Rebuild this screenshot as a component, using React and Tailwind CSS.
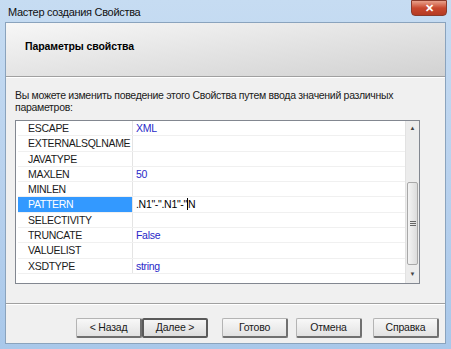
const rows = [
  { name: 'ESCAPE', value: 'XML' },
  { name: 'EXTERNALSQLNAME', value: '' },
  { name: 'JAVATYPE', value: '' },
  { name: 'MAXLEN', value: '50' },
  { name: 'MINLEN', value: '' },
  { name: 'PATTERN', value: '.N1"-".N1"-"N', selected: true },
  { name: 'SELECTIVITY', value: '' },
  { name: 'TRUNCATE', value: 'False' },
  { name: 'VALUELIST', value: '' },
  { name: 'XSDTYPE', value: 'string' },
];

const font = { fontFamily: '"Liberation Sans", Arial, sans-serif' };

function Button({ children, isDefault, className = '' }) {
  return (
    <button
      className={`flex h-[20px] w-[66px] items-center justify-center rounded-[2px] text-[10.5px] tracking-[-0.2px] text-[#1a1a1a] ${
        isDefault
          ? 'border-2 border-[#5a5a5a] bg-gradient-to-b from-[#f6f6f6] to-[#dcdcdc]'
          : 'border border-[#b4b4b4] border-r-2 border-b-2 border-r-[#707070] border-b-[#707070] bg-gradient-to-b from-[#f8f8f8] to-[#e2e2e2]'
      } ${className}`}
    >
      {children}
    </button>
  );
}

function ScrollBar() {
  return (
    <div className="flex w-[14px] flex-col border-l border-[#e2e2e2] bg-[#ececec]">
      <div className="flex h-[14px] items-center justify-center text-[6px] text-[#444]">▲</div>
      <div className="flex-1" />
      <div className="mx-[1px] flex h-[83px] items-center justify-center rounded-[2px] border border-[#a8a8a8] bg-gradient-to-r from-[#f4f4f4] to-[#dcdcdc]">
        <div className="flex flex-col gap-[1px]">
          <div className="h-px w-[6px] bg-[#666]" />
          <div className="h-px w-[6px] bg-[#666]" />
          <div className="h-px w-[6px] bg-[#666]" />
        </div>
      </div>
      <div className="flex h-[18px] items-center justify-center text-[6px] text-[#444]">▼</div>
    </div>
  );
}

export default function App() {
  return (
    <div
      className="flex h-[349px] w-[451px] flex-col bg-gradient-to-b from-[#c6dcf2] via-[#b9d2ee] to-[#a9c8ea] px-[5px] pb-[5px]"
      style={font}
    >
      <div className="flex h-[22px] items-start justify-between">
        <span className="pl-[3px] pt-[4px] text-[11px] tracking-[-0.3px] text-[#111]">Мастер создания Свойства</span>
        <div className="mr-[-1px] flex h-[16px] w-[36px] items-center justify-center rounded-b-[4px] border border-[#8a3a2a] bg-gradient-to-b from-[#e8a08a] via-[#c8482e] to-[#b53a22] text-[11px] font-bold text-white">
          ✕
        </div>
      </div>

      <div className="flex flex-1 flex-col border border-[#8aa3bd] bg-[#f0f0f0]">
        <div className="h-[54px] border-b border-[#a0a0a0] bg-gradient-to-br from-[#f7f7f7] via-[#e4e4e4] to-[#d2d2d2] pl-[19px] pt-[10px]">
          <span className="text-[10.5px] font-bold tracking-[-0.1px] text-black">Параметры свойства</span>
        </div>
        <div className="h-px bg-white" />

        <p className="px-[9px] pt-[11px] text-[10.5px] leading-[12px] tracking-[-0.3px] text-[#1a1a1a]">
          Вы можете изменить поведение этого Свойства путем ввода значений различных параметров:
        </p>

        <div className="mx-[9px] mt-[7px] flex h-[164px] w-[405px] border border-[#828790] bg-white">
          <div className="flex-1 pl-[2px]">
            {rows.map((r) => (
              <div
                key={r.name}
                className="flex h-[15.3px] border-b border-[#f0f0f0] text-[10.5px] leading-[15px] tracking-[-0.3px]"
              >
                <div
                  className={`w-[115px] border-r border-[#e4e4e4] pl-[10px] ${
                    r.selected ? 'bg-[#3399ff] text-white' : 'text-[#1a1a1a]'
                  }`}
                >
                  {r.name}
                </div>
                <div className={`pl-[3px] ${r.selected ? 'text-black' : 'text-[#2828c8]'}`}>
                  {r.selected ? (
                    <span>
                      .N1"-".N1"-"<span className="border-l border-black" />N
                    </span>
                  ) : (
                    r.value
                  )}
                </div>
              </div>
            ))}
          </div>
          <ScrollBar />
        </div>

        <div className="mt-[19px] h-px bg-[#a0a0a0]" />
        <div className="h-px bg-white" />

        <div className="flex items-start justify-end pr-[6px] pt-[13px]">
          <Button>&lt; Назад</Button>
          <Button isDefault>Далее &gt;</Button>
          <Button className="ml-[14px]">Готово</Button>
          <Button className="ml-[8px]">Отмена</Button>
          <Button className="ml-[11px]">Справка</Button>
        </div>
      </div>
    </div>
  );
}
